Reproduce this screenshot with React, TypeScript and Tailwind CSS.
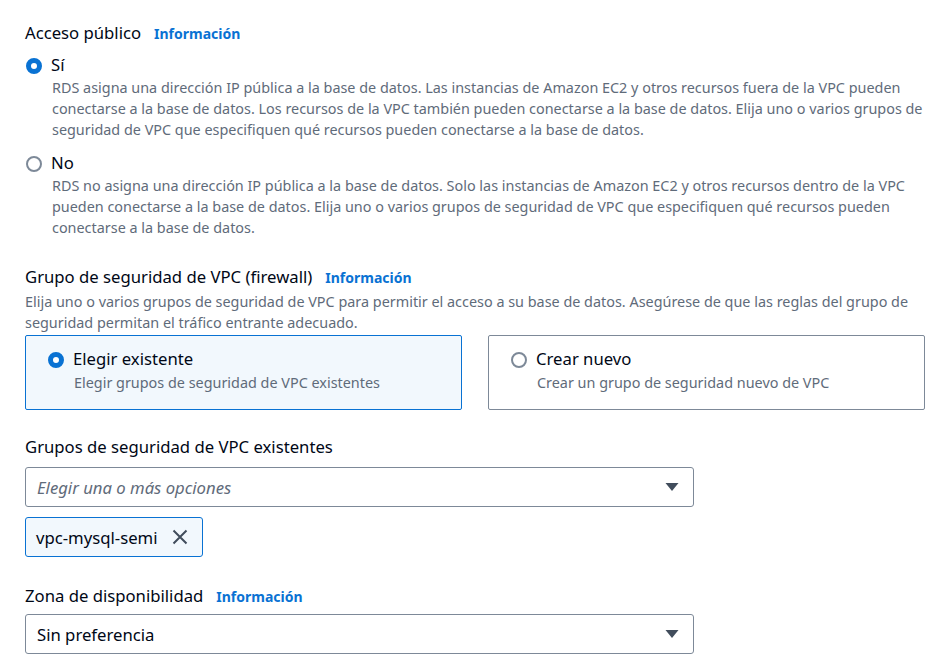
import { useState } from 'react';

function Radio({ checked }: { checked: boolean }) {
  return checked ? (
    <span className="mt-[1px] ml-[1px] box-border inline-block h-[16px] w-[16px] shrink-0 rounded-full border-[5px] border-[#0972d3] bg-white" />
  ) : (
    <span className="mt-[1px] ml-[1px] box-border inline-block h-[16px] w-[16px] shrink-0 rounded-full border-2 border-[#7d8998] bg-white" />
  );
}

function Info() {
  return <span className="ml-[13px] text-[14px] font-bold text-[#0972d3]">Información</span>;
}

function Caret() {
  return (
    <svg width="14" height="10" viewBox="0 0 14 10" className="shrink-0">
      <path d="M0.5 1h13L7 9z" fill="#414d5c" />
    </svg>
  );
}

export default function App() {
  const [access, setAccess] = useState<'si' | 'no'>('si');
  const [group, setGroup] = useState<'existing' | 'new'>('existing');

  const desc = 'text-[14.4px] leading-[21px] text-[#5f6b7a]';

  return (
    <div className="min-h-[665px] bg-white font-['Noto_Sans',sans-serif] text-[#000716]">
      <div className="w-[925px] pl-[25px] pt-[20px]">
        <div className="flex items-baseline text-[16.7px]">
          Acceso público <Info />
        </div>

        <div className="mt-[9px] cursor-pointer" onClick={() => setAccess('si')}>
          <div className="flex items-center gap-[9px] text-[16.7px] leading-[22px]">
            <Radio checked={access === 'si'} />
            Sí
          </div>
          <p className={`${desc} mt-[1px] pl-[27px]`}>
            RDS asigna una dirección IP pública a la base de datos. Las instancias de Amazon EC2 y otros recursos fuera de la VPC pueden conectarse a la base de datos. Los recursos de la VPC también pueden conectarse a la base de datos. Elija uno o varios grupos de seguridad de VPC que especifiquen qué recursos pueden conectarse a la base de datos.
          </p>
        </div>

        <div className="mt-[12px] cursor-pointer" onClick={() => setAccess('no')}>
          <div className="flex items-center gap-[9px] text-[16.7px] leading-[22px]">
            <Radio checked={access === 'no'} />
            No
          </div>
          <p className={`${desc} mt-[1px] pl-[27px]`}>
            RDS no asigna una dirección IP pública a la base de datos. Solo las instancias de Amazon EC2 y otros recursos dentro de la VPC pueden conectarse a la base de datos. Elija uno o varios grupos de seguridad de VPC que especifiquen qué recursos pueden conectarse a la base de datos.
          </p>
        </div>

        <div className="mt-[26px] flex items-baseline text-[16.7px]">
          Grupo de seguridad de VPC (firewall) <Info />
        </div>
        <p className={`${desc} mt-[2px]`}>
          Elija uno o varios grupos de seguridad de VPC para permitir el acceso a su base de datos. Asegúrese de que las reglas del grupo de seguridad permitan el tráfico entrante adecuado.
        </p>

        <div className="mt-[2px] grid grid-cols-2 gap-[26px]">
          {[
            { key: 'existing' as const, title: 'Elegir existente', text: 'Elegir grupos de seguridad de VPC existentes' },
            { key: 'new' as const, title: 'Crear nuevo', text: 'Crear un grupo de seguridad nuevo de VPC' },
          ].map((c) => (
            <div
              key={c.key}
              onClick={() => setGroup(c.key)}
              className={`h-[75px] cursor-pointer rounded-[2px] border px-[21px] pt-[12px] ${
                group === c.key ? 'border-[#0972d3] bg-[#f2f8fd]' : 'border-[#7d8998] bg-white'
              }`}
            >
              <div className="flex items-center gap-[9px] text-[16.7px] leading-[22px]">
                <Radio checked={group === c.key} />
                {c.title}
              </div>
              <p className={`${desc} mt-[2px] pl-[27px]`}>{c.text}</p>
            </div>
          ))}
        </div>

        <div className="mt-[26px] text-[16.7px] leading-[22px]">Grupos de seguridad de VPC existentes</div>
        <div className="mt-[9px] flex h-[40px] w-[669px] items-center justify-between rounded-[3px] border border-[#7d8998] pl-[11px] pr-[14px]">
          <span className="text-[16.7px] italic text-[#5f6b7a]">Elegir una o más opciones</span>
          <Caret />
        </div>
        <div className="mt-[10px] flex h-[40px] w-[178px] items-center gap-[15px] rounded-[3px] border border-[#0972d3] bg-[#f2f8fd] pl-[10px]">
          <span className="text-[16.7px]">vpc-mysql-semi</span>
          <svg width="16" height="16" viewBox="0 0 16 16">
            <path d="M1.5 1.5l13 13M14.5 1.5l-13 13" stroke="#414d5c" strokeWidth="2" />
          </svg>
        </div>

        <div className="mt-[26px] flex items-baseline text-[16.7px]">
          Zona de disponibilidad <Info />
        </div>
        <div className="mt-[6px] flex h-[40px] w-[669px] items-center justify-between rounded-[3px] border border-[#7d8998] pl-[11px] pr-[14px]">
          <span className="text-[16.7px]">Sin preferencia</span>
          <Caret />
        </div>
      </div>
    </div>
  );
}
